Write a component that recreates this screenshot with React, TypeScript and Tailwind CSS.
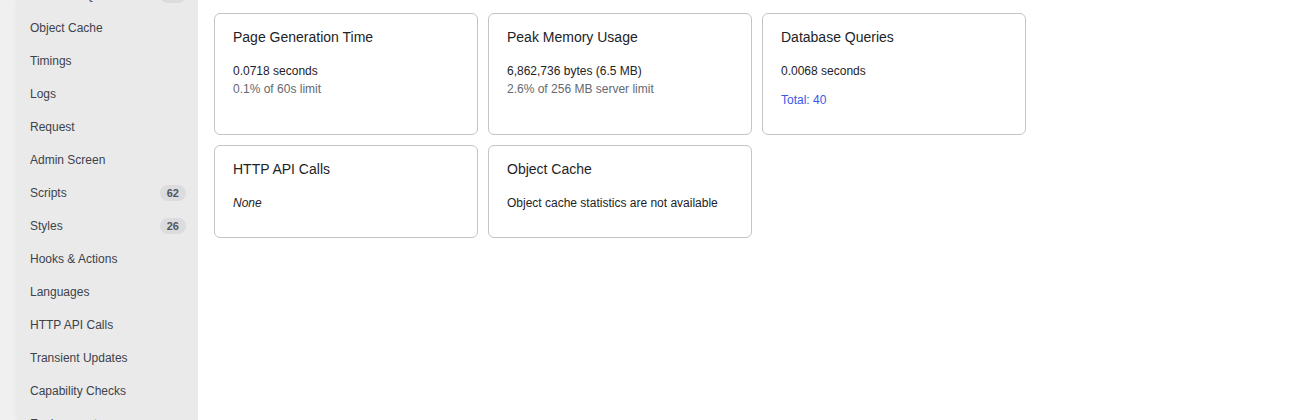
const navItems: { label: string; count?: number }[] = [
  { label: 'Database Queries', count: 40 },
  { label: 'Object Cache' },
  { label: 'Timings' },
  { label: 'Logs' },
  { label: 'Request' },
  { label: 'Admin Screen' },
  { label: 'Scripts', count: 62 },
  { label: 'Styles', count: 26 },
  { label: 'Hooks & Actions' },
  { label: 'Languages' },
  { label: 'HTTP API Calls' },
  { label: 'Transient Updates' },
  { label: 'Capability Checks' },
  { label: 'Environment' },
];

function Card({ title, children }: { title: string; children: React.ReactNode }) {
  return (
    <div className="border border-[#c3c4c7] rounded-[6px] bg-white px-[18px] pt-[12px] pb-[25px]">
      <h2 className="text-[14px] leading-[22px] text-[#1d2327] font-normal">{title}</h2>
      <div className="mt-[14px] text-[12px] leading-[18px] text-[#1d2327]">{children}</div>
    </div>
  );
}

export default function App() {
  return (
    <div
      className="flex h-[420px] overflow-hidden bg-white"
      style={{ fontFamily: '"Liberation Sans", Arial, sans-serif' }}
    >
      {/* sidebar */}
      <div className="w-[18px] shrink-0 bg-[#f0f0f0]" />
      <nav className="w-[180px] shrink-0 bg-[#eaeaea] px-[12px] shadow-[-2px_0_4px_rgba(0,0,0,0.04)]">
        <ul className="-mt-[22px]">
          {navItems.map((item) => (
            <li key={item.label} className="h-[33px] flex items-center justify-between">
              <span className="text-[12px] text-[#3c434a]">{item.label}</span>
              {item.count !== undefined && (
                <span className="h-[16px] px-[7px] rounded-full bg-[#dcdcde] text-[#50575e] text-[11px] font-bold leading-[16px]">
                  {item.count}
                </span>
              )}
            </li>
          ))}
        </ul>
      </nav>

      {/* panels */}
      <main className="flex-1 pl-[16px] pt-[13px]">
        <div className="grid grid-cols-[repeat(3,264px)] gap-[10px]">
          <Card title="Page Generation Time">
            <p>0.0718 seconds</p>
            <p className="text-[#646970]">0.1% of 60s limit</p>
          </Card>
          <Card title="Peak Memory Usage">
            <p>6,862,736 bytes (6.5 MB)</p>
            <p className="text-[#646970]">2.6% of 256 MB server limit</p>
          </Card>
          <Card title="Database Queries">
            <p>0.0068 seconds</p>
            <p className="mt-[11px] text-[#3858e9]">Total: 40</p>
          </Card>
          <Card title="HTTP API Calls">
            <p className="italic">None</p>
          </Card>
          <Card title="Object Cache">
            <p>Object cache statistics are not available</p>
          </Card>
        </div>
      </main>
    </div>
  );
}
